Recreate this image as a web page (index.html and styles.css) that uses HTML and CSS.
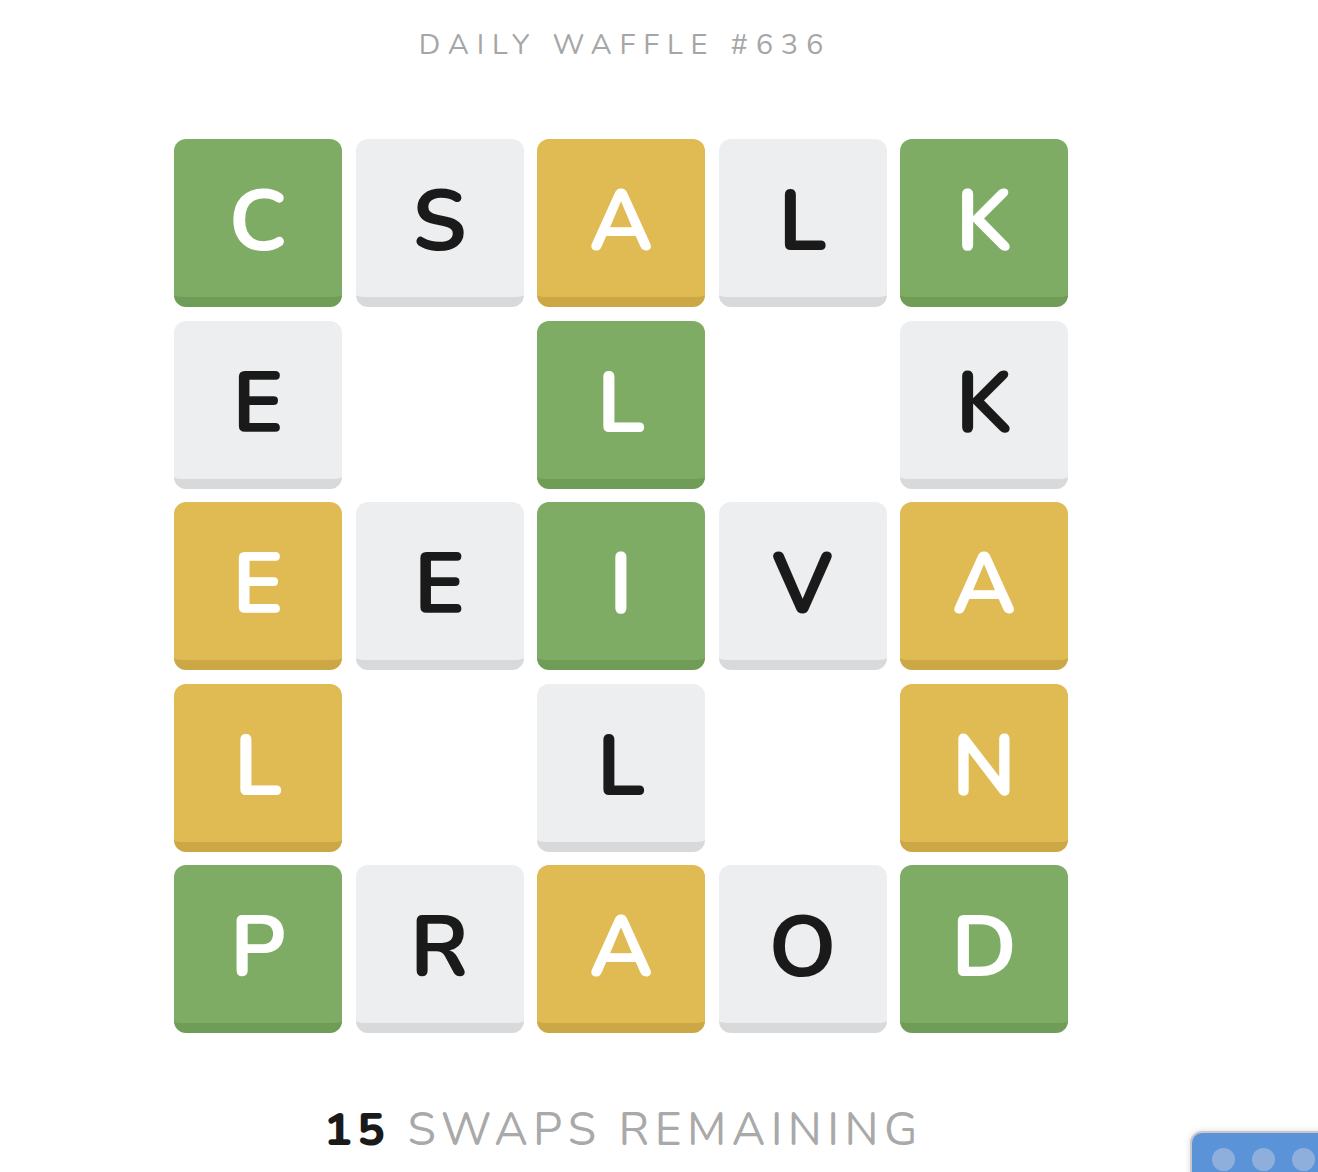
FILE: index.html
```html
<!DOCTYPE html>
<html>
<head>
<meta charset="utf-8">
<link rel="stylesheet" href="styles.css">
</head>
<body>
<main class="page">
  <h1 class="title">DAILY WAFFLE #636</h1>
  <div class="board">
    <div class="tile green">C</div>
    <div class="tile grey">S</div>
    <div class="tile yellow">A</div>
    <div class="tile grey">L</div>
    <div class="tile green">K</div>

    <div class="tile grey">E</div>
    <div class="hole"></div>
    <div class="tile green">L</div>
    <div class="hole"></div>
    <div class="tile grey">K</div>

    <div class="tile yellow">E</div>
    <div class="tile grey">E</div>
    <div class="tile green">I</div>
    <div class="tile grey">V</div>
    <div class="tile yellow">A</div>

    <div class="tile yellow">L</div>
    <div class="hole"></div>
    <div class="tile grey">L</div>
    <div class="hole"></div>
    <div class="tile yellow">N</div>

    <div class="tile green">P</div>
    <div class="tile grey">R</div>
    <div class="tile yellow">A</div>
    <div class="tile grey">O</div>
    <div class="tile green">D</div>
  </div>
  <p class="swaps"><span class="count">15</span> SWAPS REMAINING</p>
</main>
<div class="widget">
  <span class="dot"></span><span class="dot"></span><span class="dot"></span>
</div>
</body>
</html>
```

FILE: styles.css
```css
html, body {
  margin: 0;
  padding: 0;
  background: #ffffff;
  overflow: hidden;
}

body {
  width: 1318px;
  height: 1172px;
  font-family: "Nunito", "Lato", "Noto Sans", sans-serif;
}

.page {
  width: 1242px;
  display: flex;
  flex-direction: column;
  align-items: center;
}

.title {
  margin: 28px 0 0 8px;
  font-size: 29px;
  line-height: 34px;
  font-weight: 400;
  letter-spacing: 7.8px;
  color: #a6a6a6;
}

.board {
  margin-top: 77px;
  display: grid;
  grid-template-columns: repeat(5, 168px);
  grid-auto-rows: 168px;
  column-gap: 13.5px;
  row-gap: 13.5px;
}

.tile {
  box-sizing: border-box;
  border-radius: 12px;
  border-bottom: 10px solid;
  padding-top: 8px;
  display: flex;
  align-items: center;
  justify-content: center;
  font-size: 86px;
  font-weight: 700;
  line-height: 1;
}

.green {
  background: #7eac64;
  border-bottom-color: #6f9c56;
  color: #ffffff;
}

.yellow {
  background: #e0bb54;
  border-bottom-color: #cba746;
  color: #ffffff;
}

.grey {
  background: #edeef0;
  border-bottom-color: #d8d9db;
  color: #1a1a1a;
}

.swaps {
  margin: 70px 0 0 5px;
  font-size: 46px;
  line-height: 54px;
  letter-spacing: 5.4px;
  color: #a9a9a9;
}

.count {
  color: #1a1a1a;
  font-weight: 800;
}

.widget {
  position: fixed;
  left: 1190px;
  top: 1131px;
  width: 160px;
  height: 80px;
  box-sizing: border-box;
  border-radius: 12px;
  background: #5b93d8;
  border: 2px solid #c8c8c8;
  box-shadow: 0 0 6px rgba(0, 0, 0, 0.15);
  display: flex;
  gap: 17px;
  padding: 15px 0 0 20px;
}

.dot {
  width: 23px;
  height: 23px;
  border-radius: 50%;
  background: #8eaedb;
}
```
